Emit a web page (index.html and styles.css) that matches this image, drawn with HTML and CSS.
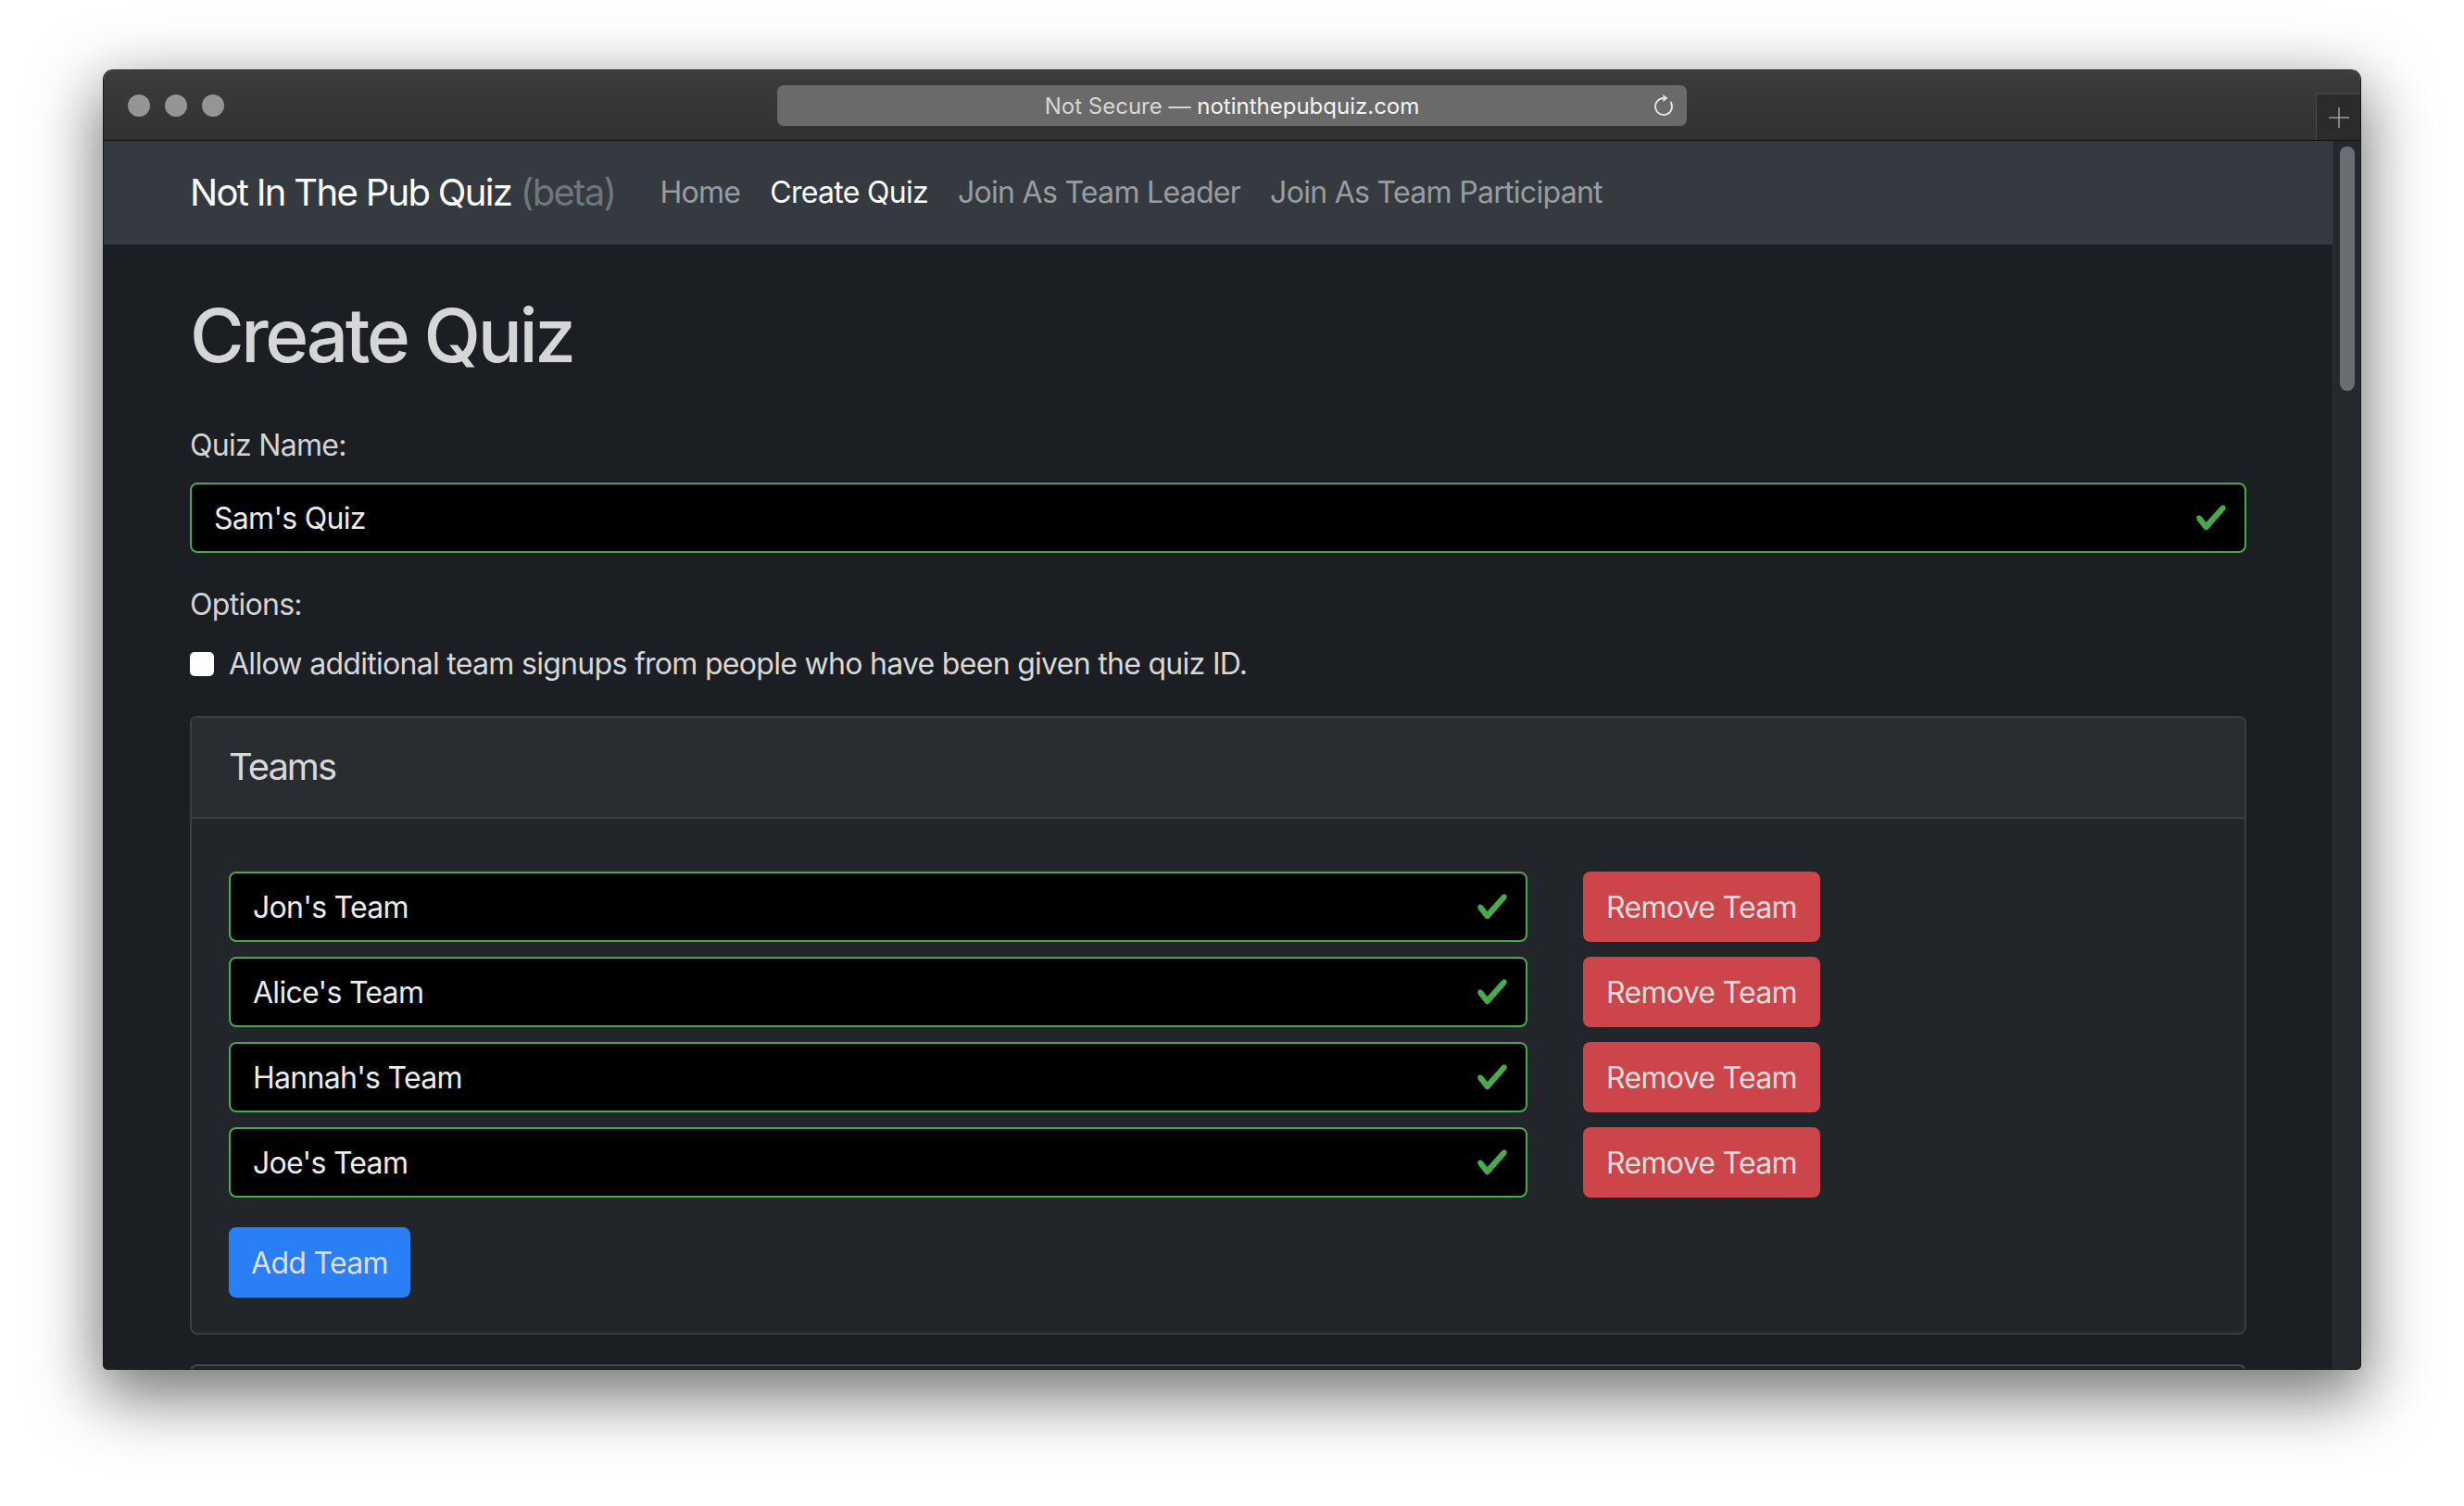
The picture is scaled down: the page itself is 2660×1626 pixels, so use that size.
FILE: index.html
```html
<!DOCTYPE html>
<html lang="en">
<head>
<meta charset="utf-8">
<title>Not In The Pub Quiz</title>
<link rel="stylesheet" href="styles.css">
</head>
<body>
<div class="desktop">
  <div class="window">
    <div class="titlebar">
      <div class="lights"><span class="light"></span><span class="light"></span><span class="light"></span></div>
      <div class="urlbar">
        <span class="url-text"><span class="url-dim">Not Secure — </span>notinthepubquiz.com</span>
        <svg class="reload" viewBox="0 0 24 26" width="24" height="26" aria-hidden="true">
          <path d="M12 6 A9 9 0 1 0 19.8 10.5" fill="none" stroke="#e6e6e6" stroke-width="1.8" stroke-linecap="round"/>
          <path d="M11.4 2 L16.4 6 L11.4 10 Z" fill="#e6e6e6"/>
        </svg>
      </div>
      <div class="newtab">
        <svg viewBox="0 0 22 22" width="22" height="22" aria-hidden="true">
          <path d="M11 0 V22 M0 11 H22" stroke="#9c9c9c" stroke-width="1.6"/>
        </svg>
      </div>
    </div>
    <div class="viewport">
      <div class="page">
        <nav class="navbar">
          <div class="container nav-inner">
            <a class="brand" href="#">Not In The Pub Quiz <span class="beta">(beta)</span></a>
            <ul class="nav-links">
              <li><a class="nav-link" href="#">Home</a></li>
              <li><a class="nav-link active" href="#">Create Quiz</a></li>
              <li><a class="nav-link" href="#">Join As Team Leader</a></li>
              <li><a class="nav-link" href="#">Join As Team Participant</a></li>
            </ul>
          </div>
        </nav>
        <main class="container main">
          <h1 class="title">Create Quiz</h1>
          <form class="quiz-form">
            <div class="form-group">
              <label class="label">Quiz Name:</label>
              <div class="field">
                <input class="field-input" type="text" value="Sam's Quiz">
                <svg class="check" viewBox="0 0 8 8" width="36" height="36" aria-hidden="true"><path fill="#4aa84f" d="M2.3 6.73L.6 4.53c-.4-1.04.46-1.4 1.1-.8l1.1 1.4 3.4-3.8c.6-.63 1.6-.27 1.2.7l-4 4.6c-.43.5-.8.4-1.1.1z"/></svg>
              </div>
            </div>
            <div class="form-group">
              <div class="label">Options:</div>
              <label class="check-row"><span class="checkbox"></span>Allow additional team signups from people who have been given the quiz ID.</label>
            </div>
            <section class="card">
              <div class="card-header"><h5 class="card-title">Teams</h5></div>
              <div class="card-body">
                <div class="team-row">
                  <div class="field team-field">
                    <input class="field-input" type="text" value="Jon's Team">
                    <svg class="check" viewBox="0 0 8 8" width="36" height="36" aria-hidden="true"><path fill="#4aa84f" d="M2.3 6.73L.6 4.53c-.4-1.04.46-1.4 1.1-.8l1.1 1.4 3.4-3.8c.6-.63 1.6-.27 1.2.7l-4 4.6c-.43.5-.8.4-1.1.1z"/></svg>
                  </div>
                  <button class="btn btn-danger" type="button">Remove Team</button>
                </div>
                <div class="team-row">
                  <div class="field team-field">
                    <input class="field-input" type="text" value="Alice's Team">
                    <svg class="check" viewBox="0 0 8 8" width="36" height="36" aria-hidden="true"><path fill="#4aa84f" d="M2.3 6.73L.6 4.53c-.4-1.04.46-1.4 1.1-.8l1.1 1.4 3.4-3.8c.6-.63 1.6-.27 1.2.7l-4 4.6c-.43.5-.8.4-1.1.1z"/></svg>
                  </div>
                  <button class="btn btn-danger" type="button">Remove Team</button>
                </div>
                <div class="team-row">
                  <div class="field team-field">
                    <input class="field-input" type="text" value="Hannah's Team">
                    <svg class="check" viewBox="0 0 8 8" width="36" height="36" aria-hidden="true"><path fill="#4aa84f" d="M2.3 6.73L.6 4.53c-.4-1.04.46-1.4 1.1-.8l1.1 1.4 3.4-3.8c.6-.63 1.6-.27 1.2.7l-4 4.6c-.43.5-.8.4-1.1.1z"/></svg>
                  </div>
                  <button class="btn btn-danger" type="button">Remove Team</button>
                </div>
                <div class="team-row">
                  <div class="field team-field">
                    <input class="field-input" type="text" value="Joe's Team">
                    <svg class="check" viewBox="0 0 8 8" width="36" height="36" aria-hidden="true"><path fill="#4aa84f" d="M2.3 6.73L.6 4.53c-.4-1.04.46-1.4 1.1-.8l1.1 1.4 3.4-3.8c.6-.63 1.6-.27 1.2.7l-4 4.6c-.43.5-.8.4-1.1.1z"/></svg>
                  </div>
                  <button class="btn btn-danger" type="button">Remove Team</button>
                </div>
                <button class="btn btn-primary add-btn" type="button">Add Team</button>
              </div>
            </section>
            <section class="card card-next"></section>
          </form>
        </main>
      </div>
      <div class="scrollbar"><div class="thumb"></div></div>
    </div>
  </div>
</div>
</body>
</html>
```

FILE: styles.css
```css
* { box-sizing: border-box; }

html, body {
  margin: 0;
  padding: 0;
  background: #ffffff;
}

body {
  font-family: "Inter", "Noto Sans", sans-serif;
  width: 2660px;
  height: 1626px;
  overflow: hidden;
}

.desktop {
  width: 2660px;
  height: 1626px;
  padding: 76px 0 0 112px;
  background: #ffffff;
}

.window {
  width: 2436px;
  height: 1402px;
  border-radius: 10px 10px 4px 4px;
  overflow: hidden;
  display: flex;
  flex-direction: column;
  box-shadow: 0 0 0 1px #161616, 0 24px 70px 6px rgba(0, 0, 0, 0.55);
}

/* ---------- title bar ---------- */
.titlebar {
  height: 76px;
  flex: none;
  display: grid;
  grid-template-columns: 1fr 982px 1fr;
  background: linear-gradient(#3c3c3c, #313131);
  border-bottom: 1px solid #0e0e0e;
  box-shadow: inset 0 1px 0 #4a4a4a;
}

.lights {
  display: flex;
  gap: 16px;
  padding: 26px 0 0 26px;
}

.light {
  width: 24px;
  height: 24px;
  border-radius: 50%;
  background: #959595;
}

.urlbar {
  margin-top: 16px;
  height: 44px;
  border-radius: 7px;
  background: #6a6a6a;
  display: flex;
  align-items: center;
  justify-content: center;
  position: relative;
}

.url-text {
  font-size: 24px;
  color: #f4f4f4;
}

.url-dim { color: #d6d6d6; }

.reload {
  position: absolute;
  right: 13px;
  top: 8px;
}

.newtab {
  justify-self: end;
  align-self: end;
  width: 48px;
  height: 50px;
  background: #2b2b2b;
  border-left: 1px solid #4a4a4a;
  border-top: 1px solid #4a4a4a;
  display: flex;
  align-items: center;
  justify-content: center;
}

/* ---------- viewport ---------- */
.viewport {
  flex: 1;
  display: flex;
  min-height: 0;
  background: #1b1e22;
}

.page {
  flex: 1;
  overflow: hidden;
  background: #1b1e22;
  color: #d5d5d5;
}

.scrollbar {
  width: 30px;
  flex: none;
  background: #25282c;
  border-left: 1px solid #2e3135;
  padding: 6px 0 0 7px;
}

.thumb {
  width: 16px;
  height: 264px;
  border-radius: 8px;
  background: #6a6d72;
}

.container {
  width: 2280px;
  margin: 0 auto;
  padding: 0 30px;
}

/* ---------- navbar ---------- */
.navbar {
  background: #343a40;
  height: 112px;
}

.nav-inner {
  height: 100%;
  display: flex;
  align-items: center;
}

.brand {
  font-size: 40px;
  line-height: 60px;
  letter-spacing: -0.042em;
  color: #ffffff;
  text-decoration: none;
  margin-right: 32px;
  white-space: nowrap;
}

.beta { color: #6f767d; }

.nav-links {
  display: flex;
  list-style: none;
  margin: 0;
  padding: 0;
}

.nav-link {
  display: block;
  padding: 0 16px;
  font-size: 32px;
  line-height: 48px;
  letter-spacing: -0.022em;
  color: rgba(255, 255, 255, 0.5);
  text-decoration: none;
  white-space: nowrap;
}

.nav-link.active { color: #ffffff; }

/* ---------- main ---------- */
.title {
  margin: 50px 0 47px;
  font-size: 80px;
  line-height: 96px;
  font-weight: 500;
  letter-spacing: -0.042em;
  color: #d6d6d6;
}

.quiz-form { margin: 0; }

.form-group { margin-bottom: 32px; }

.label {
  display: block;
  font-size: 32px;
  line-height: 48px;
  letter-spacing: -0.022em;
  margin-bottom: 16px;
  color: #d4d4d4;
}

.field {
  height: 76px;
  display: flex;
  align-items: center;
  background: #000000;
  border: 2px solid #4aa84f;
  border-radius: 8px;
  padding: 0 18px 0 24px;
}

.field-input {
  flex: 1;
  min-width: 0;
  background: transparent;
  border: 0;
  outline: none;
  padding: 0;
  font-family: inherit;
  font-size: 32px;
  letter-spacing: -0.022em;
  color: #ececec;
}

.check { flex: none; }

.check-row {
  display: flex;
  align-items: center;
  gap: 16px;
  font-size: 32px;
  line-height: 48px;
  letter-spacing: -0.022em;
  color: #d8d8d8;
}

.checkbox {
  width: 26px;
  height: 26px;
  border-radius: 5px;
  background: #ffffff;
  flex: none;
}

/* ---------- card ---------- */
.card {
  background: #222529;
  border: 2px solid #3a3d41;
  border-radius: 8px;
  margin-bottom: 32px;
}

.card-header {
  background: #292c31;
  border-bottom: 2px solid #3a3d41;
  padding: 29px 40px 30px;
  border-radius: 6px 6px 0 0;
}

.card-title {
  margin: 0;
  font-size: 40px;
  line-height: 48px;
  font-weight: 400;
  letter-spacing: -0.05em;
  color: #d8d8d8;
}

.card-body {
  padding: 57px 40px 38px;
}

.team-row {
  display: flex;
  gap: 60px;
  margin-bottom: 16px;
}

.team-field { width: 1402px; }

.btn {
  height: 76px;
  border: 0;
  border-radius: 8px;
  padding: 0;
  font-family: inherit;
  font-size: 32px;
  letter-spacing: -0.022em;
  white-space: nowrap;
  text-align: center;
  color: #dedede;
}

.btn-danger {
  width: 256px;
  background: #cc454b;
}

.btn-primary {
  width: 196px;
  background: #2a7ff6;
}

.add-btn {
  display: block;
  margin-top: 32px;
}

.card-next {
  height: 300px;
  border-color: #45484c;
}
```
